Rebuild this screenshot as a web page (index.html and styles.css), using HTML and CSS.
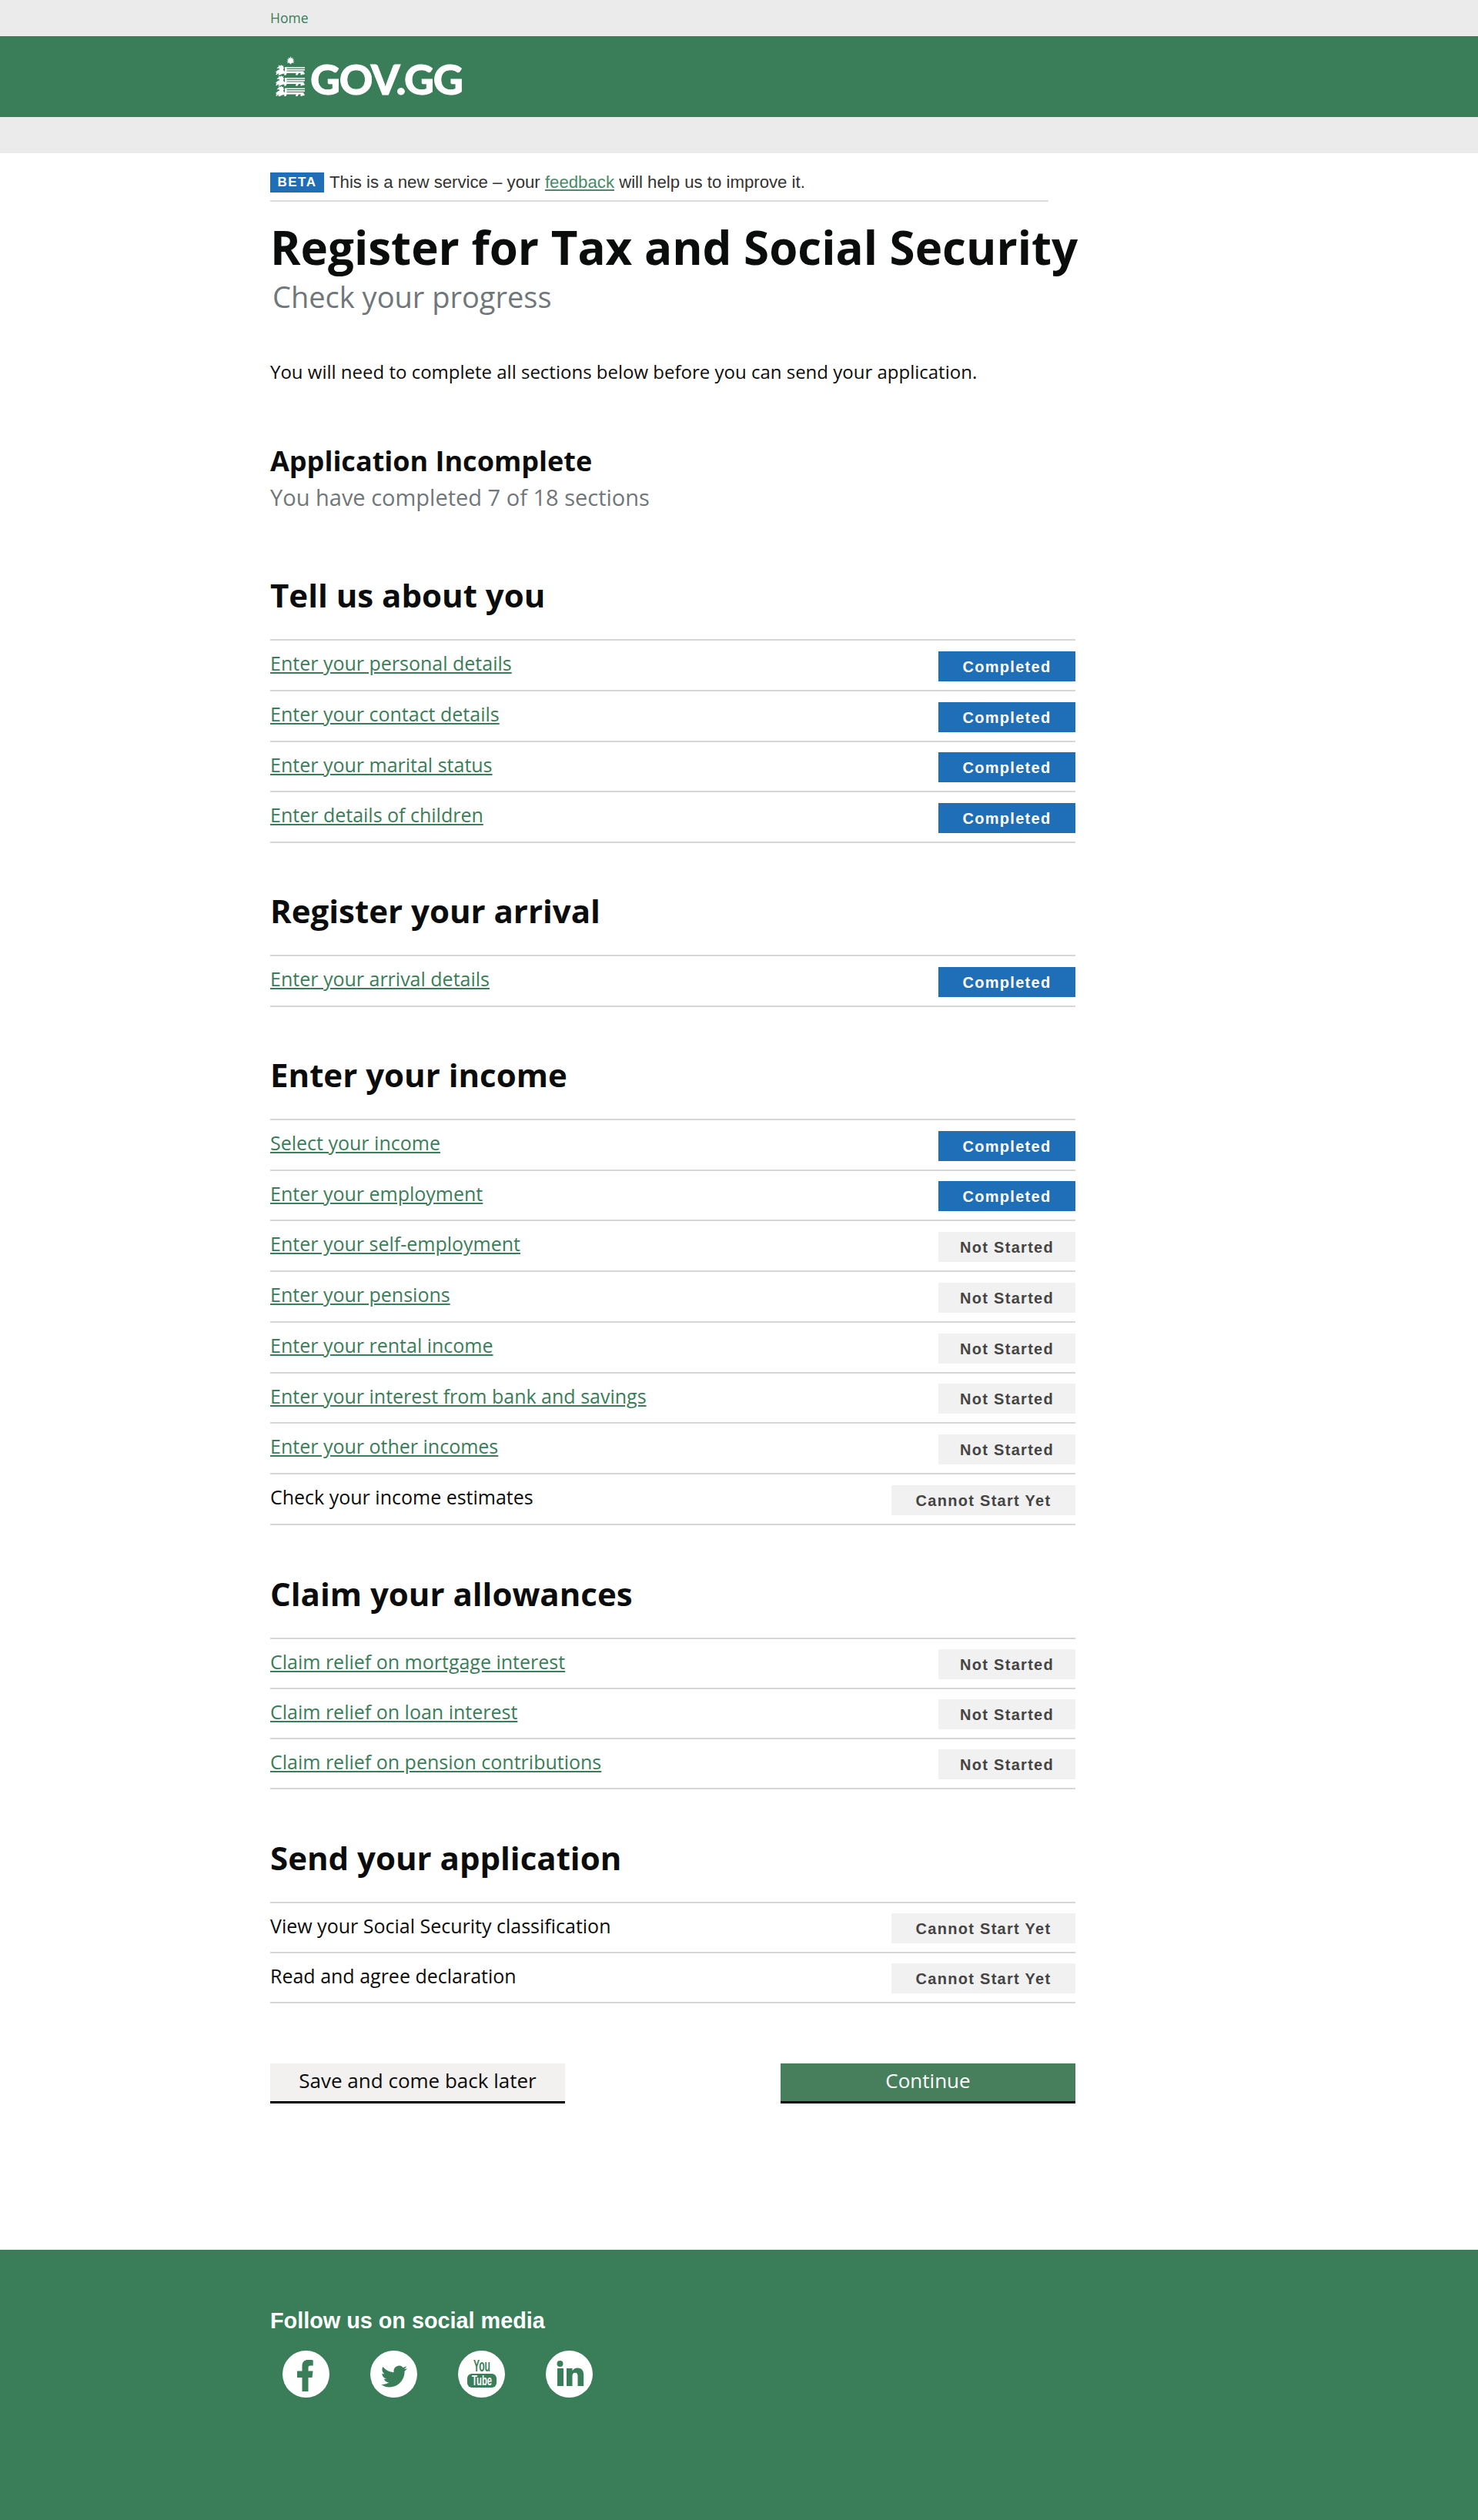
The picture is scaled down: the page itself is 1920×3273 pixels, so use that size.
FILE: index.html
```html
<!DOCTYPE html>
<html lang="en">
<head>
    <meta charset="UTF-8">
    <meta name="viewport" content="width=device-width, initial-scale=1.0">
    <title>Register for Tax and Social Security - GOV.GG</title>
    <link rel="stylesheet" href="styles.css">
</head>
<body>
    <svg class="defs" width="0" height="0">
        <defs>
            <g id="lion">
                <path d="M0 9.500l3-2.500 2.500-1-1.500-1.500-2.500.5L3 3l1.500-.8L3.600.6 6 1.600 7.800.2l1 1.600 1.600-.6-.4 2 1.500 1.200-1.600 1 .8 2.600 1.300.5V3h26v1.600H14.500v1.200H38v1.600H14.500v1.200h22V10l1.500 1.500-1.500 1.500-1-.8-.8 1h-2.500l.6-2.200H30l-1.500 2.500H26l.7-2.500H14.500l-1 2.500H11l.5-2-3 .5-3 1.500H3l2-2-2.500.5-.7 1.200L0 12.500l1.500-1.500z"/>
            </g>
        </defs>
    </svg>

    <div class="topbar">
        <div class="wrap"><a href="#">Home</a></div>
    </div>
    <header class="site-header">
        <div class="wrap logo">
            <svg class="crest" viewBox="0 0 39 52" width="39" height="52" fill="#fff">
                <path d="M19.500 0l1 3 2-1.500-.7 2.500 2.400-.5-1.800 2 2.400.8-2.400.8 1.800 2-2.800-.7-1.900 2.100-1.900-2.100-2.800.7 1.800-2-2.400-.8 2.400-.8-1.800-2 2.400.5-.7-2.500 2 1.500z"/>
                <use href="#lion" y="11"/>
                <use href="#lion" y="25"/>
                <use href="#lion" y="38.500"/>
            </svg>
            <span class="logo-text">GOV.GG</span>
        </div>
    </header>
    <div class="subbar"></div>

    <main class="wrap">
        <div class="beta">
            <span class="beta-tag">BETA</span>
            <span>This is a new service – your <a href="#">feedback</a> will help us to improve it.</span>
        </div>

        <h1>Register for Tax and Social Security</h1>
        <p class="subtitle">Check your progress</p>

        <p class="intro">You will need to complete all sections below before you can send your application.</p>

        <h2 class="status-title">Application Incomplete</h2>
        <p class="status-text">You have completed 7 of 18 sections</p>

        <section class="task-group first">
            <h2>Tell us about you</h2>
            <ul class="tasks">
                <li><a href="#">Enter your personal details</a><span class="badge done">Completed</span></li>
                <li><a href="#">Enter your contact details</a><span class="badge done">Completed</span></li>
                <li><a href="#">Enter your marital status</a><span class="badge done">Completed</span></li>
                <li><a href="#">Enter details of children</a><span class="badge done">Completed</span></li>
            </ul>
        </section>

        <section class="task-group">
            <h2>Register your arrival</h2>
            <ul class="tasks">
                <li><a href="#">Enter your arrival details</a><span class="badge done">Completed</span></li>
            </ul>
        </section>

        <section class="task-group">
            <h2>Enter your income</h2>
            <ul class="tasks">
                <li><a href="#">Select your income</a><span class="badge done">Completed</span></li>
                <li><a href="#">Enter your employment</a><span class="badge done">Completed</span></li>
                <li><a href="#">Enter your self-employment</a><span class="badge todo">Not Started</span></li>
                <li><a href="#">Enter your pensions</a><span class="badge todo">Not Started</span></li>
                <li><a href="#">Enter your rental income</a><span class="badge todo">Not Started</span></li>
                <li><a href="#">Enter your interest from bank and savings</a><span class="badge todo">Not Started</span></li>
                <li><a href="#">Enter your other incomes</a><span class="badge todo">Not Started</span></li>
                <li><span>Check your income estimates</span><span class="badge todo wide">Cannot Start Yet</span></li>
            </ul>
        </section>

        <section class="task-group tight">
            <h2>Claim your allowances</h2>
            <ul class="tasks">
                <li><a href="#">Claim relief on mortgage interest</a><span class="badge todo">Not Started</span></li>
                <li><a href="#">Claim relief on loan interest</a><span class="badge todo">Not Started</span></li>
                <li><a href="#">Claim relief on pension contributions</a><span class="badge todo">Not Started</span></li>
            </ul>
        </section>

        <section class="task-group tight">
            <h2>Send your application</h2>
            <ul class="tasks">
                <li><span>View your Social Security classification</span><span class="badge todo wide">Cannot Start Yet</span></li>
                <li><span>Read and agree declaration</span><span class="badge todo wide">Cannot Start Yet</span></li>
            </ul>
        </section>

        <div class="actions">
            <a href="#" class="btn btn-save">Save and come back later</a>
            <a href="#" class="btn btn-continue">Continue</a>
        </div>
    </main>

    <footer class="site-footer">
        <div class="wrap">
            <h2>Follow us on social media</h2>
            <div class="social">
                <svg viewBox="0 0 61 61" width="61" height="61">
                    <circle cx="30.500" cy="30.500" r="30.500" fill="#fff"/>
                    <path fill="#3a7d59" d="M25.500 53V35h-6.500v-8.500h6.500v-6.500c0-5.500 3.200-8 8-8 2.700 0 5 .2 6.200.4v7.100h-3.500c-2.200 0-2.700 1-2.700 2.900v4.100h6l-1 8.500h-5V53z"/>
                </svg>
                <svg viewBox="0 0 61 61" width="61" height="61">
                    <circle cx="30.500" cy="30.500" r="30.500" fill="#fff"/>
                    <g transform="translate(14 16.500) scale(1.420)">
                        <path fill="#3a7d59" d="M23.953 4.570a10 10 0 01-2.825.775 4.958 4.958 0 002.163-2.723c-.951.555-2.005.959-3.127 1.184a4.920 4.920 0 00-8.384 4.482C7.690 8.095 4.067 6.130 1.640 3.162a4.822 4.822 0 00-.666 2.475c0 1.710.870 3.213 2.188 4.096a4.904 4.904 0 01-2.228-.616v.060a4.923 4.923 0 003.946 4.827 4.996 4.996 0 01-2.212.085 4.936 4.936 0 004.604 3.417 9.867 9.867 0 01-6.102 2.105c-.390 0-.779-.023-1.170-.067a13.995 13.995 0 007.557 2.209c9.053 0 13.998-7.496 13.998-13.985 0-.210 0-.420-.015-.630A9.935 9.935 0 0024 4.590z"/>
                    </g>
                </svg>
                <svg viewBox="0 0 61 61" width="61" height="61">
                    <circle cx="30.500" cy="30.500" r="30.500" fill="#fff"/>
                    <text class="yt-you" x="31" y="26.500" text-anchor="middle" textLength="22" lengthAdjust="spacingAndGlyphs">You</text>
                    <rect x="12" y="30" width="38" height="18" rx="6" fill="#3a7d59"/>
                    <text class="yt-tube" x="31" y="45" text-anchor="middle" textLength="26" lengthAdjust="spacingAndGlyphs">Tube</text>
                </svg>
                <svg viewBox="0 0 61 61" width="61" height="61">
                    <circle cx="30.500" cy="30.500" r="30.500" fill="#fff"/>
                    <circle cx="18.500" cy="17" r="4" fill="#3a7d59"/>
                    <rect x="15" y="23" width="8" height="23" fill="#3a7d59"/>
                    <path fill="#3a7d59" d="M27 23h7.500v3.200c1.300-2.200 3.800-3.800 6.700-3.800 6 0 8 3.800 8 9.600V46h-7.700V33.500c0-3-.8-4.800-3.300-4.800-2.700 0-3.700 1.900-3.700 4.800V46H27z"/>
                </svg>
            </div>
        </div>
    </footer>
</body>
</html>
```

FILE: styles.css
```css
/* General Styles */
body {
    font-family: "Open Sans", Arial, sans-serif;
    margin: 0;
    padding: 0;
    color: #0b0c0c;
    background-color: #fff;
}

a {
    color: #3a7d59;
}

.defs {
    position: absolute;
}

.wrap {
    width: 1218px;
    margin-left: 351px;
}

/* Top bars */
.topbar {
    background-color: #ebebeb;
    height: 47px;
    line-height: 47px;
    font-family: "Open Sans", Arial, sans-serif;
    font-size: 17.500px;
}

.topbar a {
    text-decoration: none;
}

.site-header {
    background-color: #3a7d59;
    height: 105px;
}

.logo {
    display: flex;
    align-items: center;
    height: 105px;
    padding-left: 7px;
    box-sizing: border-box;
}

.crest {
    display: block;
    margin-top: -2px;
}

.logo-text {
    color: #fff;
    -webkit-text-stroke: 0.800px #fff;
    font-family: Lato, Arial, sans-serif;
    font-weight: 900;
    font-size: 54px;
    letter-spacing: -1.400px;
    margin-left: 6px;
    margin-top: 6px;
}

.subbar {
    background-color: #ebebeb;
    height: 47px;
}

/* Beta banner */
.beta {
    display: flex;
    align-items: center;
    width: 1011px;
    padding: 25px 0 10px;
    border-bottom: 2px solid #dcdcdc;
    font-family: "Liberation Sans", Arial, sans-serif;
    font-size: 22.200px;
    color: #333;
}

.beta a {
    color: #4a8a68;
}

.beta-tag {
    background-color: #1e6eb8;
    color: #fff;
    font-weight: bold;
    font-size: 17px;
    letter-spacing: 1.500px;
    width: 70px;
    height: 26px;
    line-height: 26px;
    text-align: center;
    margin-right: 7px;
}

/* Headings */
h1 {
    font-size: 60px;
    font-weight: 700;
    line-height: 80px;
    margin: 19px 0 0;
}

.subtitle {
    font-size: 38px;
    color: #6f777b;
    margin: 0 0 0 3px;
    line-height: 48px;
}

.intro {
    font-size: 24px;
    line-height: 34px;
    margin: 57px 0 0;
}

.status-title {
    font-size: 36px;
    font-weight: 700;
    line-height: 48px;
    margin: 75px 0 0;
}

.status-text {
    font-size: 29px;
    color: #6f777b;
    line-height: 40px;
    margin: 3px 0 0;
}

/* Task lists */
.task-group {
    width: 1046px;
    margin-top: 59px;
}

.task-group.first {
    margin-top: 78px;
}

.task-group.tight {
    margin-top: 60px;
}

.task-group h2 {
    font-size: 42px;
    font-weight: 700;
    line-height: 58px;
    margin: 0 0 28px;
}

.tasks {
    list-style: none;
    margin: 0;
    padding: 0;
    border-top: 2px solid #d6d6d6;
    font-size: 25px;
}

.tasks li {
    display: flex;
    justify-content: space-between;
    height: 63.750px;
    border-bottom: 2px solid #d6d6d6;
    line-height: 58px;
}

.tight .tasks li {
    height: 63px;
}

.badge {
    align-self: center;
    width: 178px;
    height: 39px;
    line-height: 40px;
    margin-top: 3px;
    text-align: center;
    font-family: "Liberation Sans", Arial, sans-serif;
    font-size: 20px;
    font-weight: bold;
    letter-spacing: 1.300px;
}

.done {
    background-color: #1e6eb8;
    color: #fff;
}

.todo {
    background-color: #f1f1f1;
    color: #444;
}

.wide {
    width: 239px;
}

/* Buttons */
.actions {
    display: flex;
    justify-content: space-between;
    width: 1046px;
    margin-top: 78px;
    margin-bottom: 190px;
}

.btn {
    display: block;
    width: 383px;
    height: 49px;
    line-height: 45px;
    border-bottom: 3px solid #000;
    text-align: center;
    text-decoration: none;
    font-size: 26px;
}

.btn-save {
    background-color: #f2f1f0;
    color: #0b0c0c;
}

.btn-continue {
    background-color: #477e5c;
    color: #fff;
}

/* Footer */
.site-footer {
    background-color: #3a7d59;
    height: 352.250px;
    overflow: hidden;
    color: #fff;
}

.site-footer h2 {
    font-family: "Liberation Sans", Arial, sans-serif;
    font-size: 28.800px;
    font-weight: bold;
    line-height: 34px;
    margin: 75px 0 0;
}

.social {
    display: flex;
    gap: 53px;
    margin: 22px 0 0 16px;
}

.yt-you,
.yt-tube {
    font-family: "Liberation Sans Narrow", "Liberation Sans", Arial, sans-serif;
    font-weight: bold;
}

.yt-you {
    font-size: 22px;
    fill: #3a7d59;
}

.yt-tube {
    font-size: 19px;
    fill: #fff;
}
```
